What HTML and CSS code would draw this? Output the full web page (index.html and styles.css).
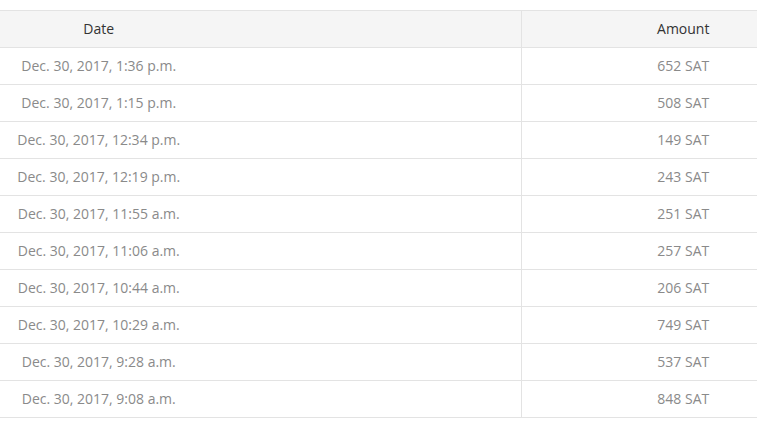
FILE: index.html
```html
<!DOCTYPE html>
<html>
<head>
<meta charset="utf-8">
<link rel="stylesheet" href="styles.css">
</head>
<body>
<table class="tx">
  <thead>
    <tr><th class="c-date">Date</th><th class="c-amt">Amount</th></tr>
  </thead>
  <tbody>
    <tr><td class="c-date">Dec. 30, 2017, 1:36 p.m.</td><td class="c-amt">652 SAT</td></tr>
    <tr><td class="c-date">Dec. 30, 2017, 1:15 p.m.</td><td class="c-amt">508 SAT</td></tr>
    <tr><td class="c-date">Dec. 30, 2017, 12:34 p.m.</td><td class="c-amt">149 SAT</td></tr>
    <tr><td class="c-date">Dec. 30, 2017, 12:19 p.m.</td><td class="c-amt">243 SAT</td></tr>
    <tr><td class="c-date">Dec. 30, 2017, 11:55 a.m.</td><td class="c-amt">251 SAT</td></tr>
    <tr><td class="c-date">Dec. 30, 2017, 11:06 a.m.</td><td class="c-amt">257 SAT</td></tr>
    <tr><td class="c-date">Dec. 30, 2017, 10:44 a.m.</td><td class="c-amt">206 SAT</td></tr>
    <tr><td class="c-date">Dec. 30, 2017, 10:29 a.m.</td><td class="c-amt">749 SAT</td></tr>
    <tr><td class="c-date">Dec. 30, 2017, 9:28 a.m.</td><td class="c-amt">537 SAT</td></tr>
    <tr><td class="c-date">Dec. 30, 2017, 9:08 a.m.</td><td class="c-amt">848 SAT</td></tr>
  </tbody>
</table>
</body>
</html>
```
FILE: styles.css
```css
html, body {
  margin: 0;
  padding: 0;
  background: #fff;
}
body {
  padding-top: 10px;
  font-family: "Open Sans", "DejaVu Sans", sans-serif;
  font-size: 14px;
}
.tx {
  width: 757px;
  border-collapse: collapse;
  table-layout: fixed;
}
.tx th, .tx td {
  height: 37px;
  padding: 0 0 1px 0;
  box-sizing: border-box;
  text-align: center;
  vertical-align: middle;
  border-top: 1px solid #e3e3e3;
  border-bottom: 1px solid #e3e3e3;
  font-weight: 400;
}
.tx thead th {
  background: #f5f5f5;
  color: #333;
}
.tx td {
  color: #8a8a8a;
}
.c-date {
  width: 521px;
  padding-right: 323px !important;
}
.c-amt {
  padding-left: 88px !important;
  border-left: 1px solid #e3e3e3;
}
```
